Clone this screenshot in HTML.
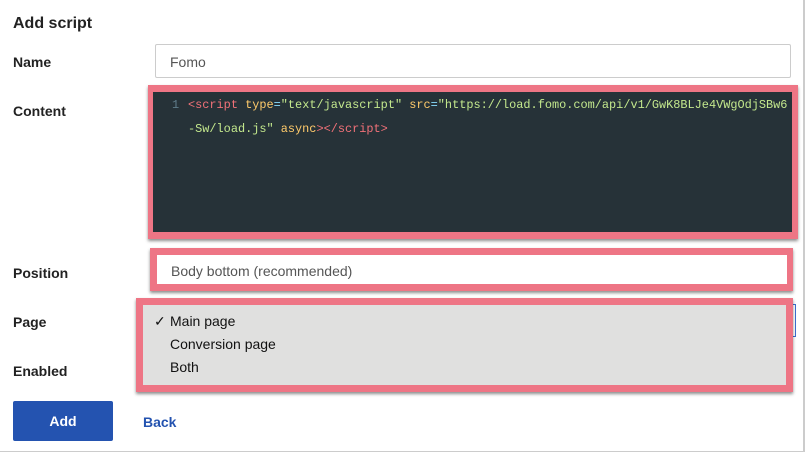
<!DOCTYPE html>
<html><head><style>
body{margin:0;width:805px;height:452px;background:#fff;font-family:"Liberation Sans",sans-serif;position:relative;overflow:hidden}
.a{position:absolute}
.lbl{position:absolute;left:13px;font-weight:bold;font-size:14px;color:#222}
.pink{position:absolute;background:#ee7585;box-shadow:0 2px 3px rgba(0,0,0,.45)}
</style></head><body>
<div class="a" style="right:0;top:0;width:2px;height:452px;background:#ccc"></div>
<div class="a" style="left:0;right:0;bottom:0;height:1px;background:#ccc"></div>
<div class="a" style="left:13px;top:15px;font-size:16px;font-weight:bold;color:#222">Add script</div>
<div class="lbl" style="top:54px">Name</div>
<div class="a" style="left:155px;top:44px;width:636px;height:34px;border:1px solid #ccc;border-radius:2px;box-sizing:border-box;font-size:14px;color:#555;padding:9px 14px">Fomo</div>
<div class="lbl" style="top:103px">Content</div>
<div class="pink" style="left:148px;top:85px;width:650px;height:154px"></div>
<div class="a" style="left:153px;top:92px;width:639px;height:140px;background:#263238;font-family:'Liberation Mono',monospace;font-size:11.9px;line-height:24px;color:#c3e88d;padding:1px 0 0 0;box-sizing:border-box;overflow:hidden">
<div style="position:absolute;left:19px;top:1px;color:#607d8b">1</div>
<div style="margin-left:35px;white-space:pre"><span style="color:#f07178">&lt;script</span> <span style="color:#ffcb6b">type</span><span style="color:#89ddff">=</span>"text/javascript" <span style="color:#ffcb6b">src</span><span style="color:#89ddff">=</span>"https://load.fomo.com/api/v1/GwK8BLJe4VWgOdjSBw6
-Sw/load.js" <span style="color:#ffcb6b">async</span><span style="color:#f07178">&gt;&lt;/script&gt;</span></div>
</div>
<div class="lbl" style="top:265px">Position</div>
<div class="pink" style="left:150px;top:248px;width:643px;height:43px"></div>
<div class="a" style="left:157px;top:255px;width:630px;height:29px;background:#fff;font-size:14px;color:#555;padding:8px 14px;box-sizing:border-box">Body bottom (recommended)</div>
<div class="lbl" style="top:314px">Page</div>
<div class="a" style="left:780px;top:304px;width:16px;height:33px;border:1px solid #3b6fd0;box-sizing:border-box"></div>
<div class="pink" style="left:136px;top:298px;width:657px;height:94px"></div>
<div class="a" style="left:143px;top:305px;width:643px;height:80px;background:#e0e0df;font-size:14px;color:#111;line-height:23px;padding:5px 0 0 0;box-sizing:border-box">
<div style="position:absolute;left:11px;top:5px">✓</div>
<div style="padding-left:27px">Main page</div><div style="padding-left:27px">Conversion page</div><div style="padding-left:27px">Both</div></div>
<div class="lbl" style="top:363px">Enabled</div>
<div class="a" style="left:13px;top:401px;width:100px;height:40px;background:#2453b0;color:#fff;font-weight:bold;font-size:14px;text-align:center;line-height:40px;border-radius:2px">Add</div>
<div class="a" style="left:143px;top:414px;color:#2453b0;font-weight:bold;font-size:14px">Back</div>
</body></html>
